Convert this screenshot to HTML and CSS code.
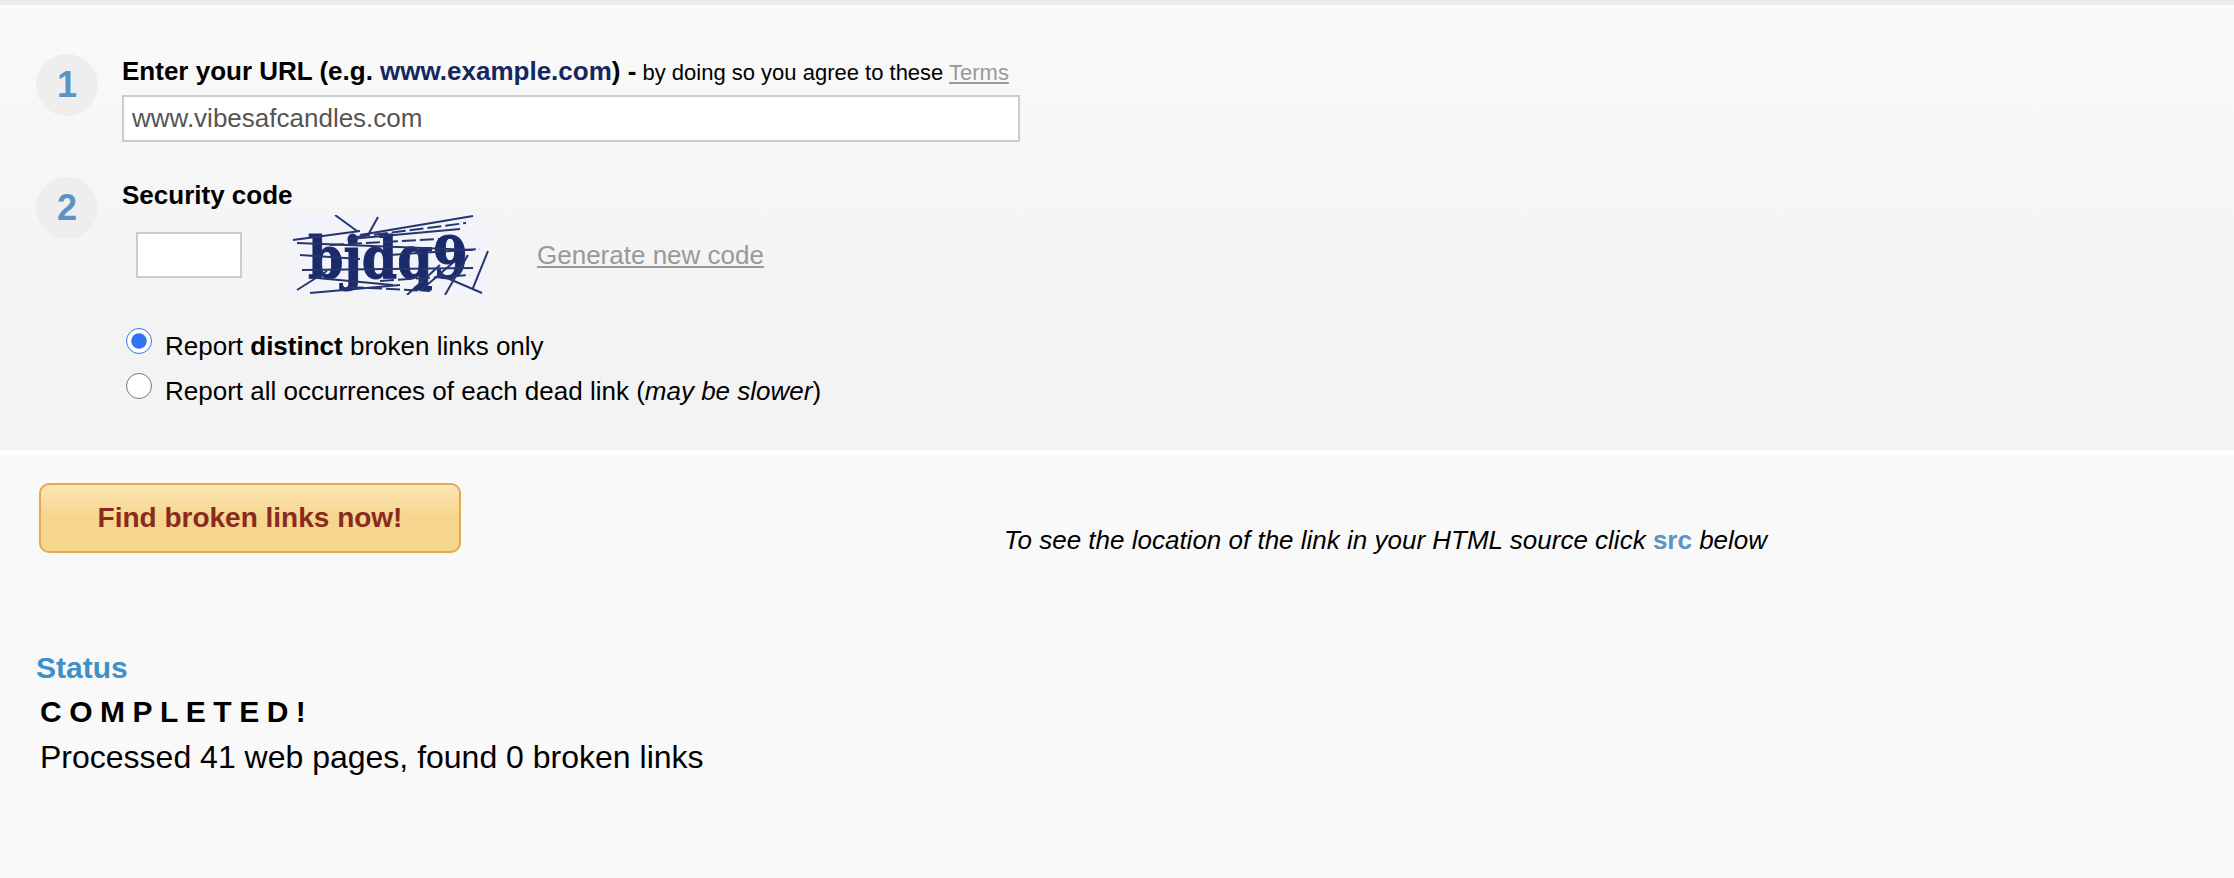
FILE: index.html
```html
<!DOCTYPE html>
<html lang="en">
<head>
  <meta charset="UTF-8" />
  <title>Broken Link Checker</title>
  <link rel="stylesheet" href="styles.css">
</head>
<body>

<form class="check-form">
  <div class="step">
    <div class="step-num">1</div>
    <div class="step-body">
      <div class="step-title">
        <b>Enter your URL (e.g. <span class="example">www.example.com</span>) -</b>
        by doing so you agree to these <a href="#" class="terms">Terms</a>
      </div>
      <input type="text" class="url-input" value="www.vibesafcandles.com" />
    </div>
  </div>

  <div class="step step-code">
    <div class="step-num">2</div>
    <div class="step-body">
      <div class="step-title"><b>Security code</b></div>
      <div class="captcha-row">
        <input type="text" class="code-input" />
        <svg class="captcha" width="200" height="80" viewBox="0 0 200 80">
          <text x="18" y="63" class="captcha-text" textLength="160" lengthAdjust="spacingAndGlyphs">bjdq9</text>
          <g class="captcha-lines">
            <path d="M45 0 L67 16 M88 2 L78 20 M183 1 L70 20 M3 25 L70 16 M7 28 L183 35 M60 24 L170 14" />
            <path d="M12 55 L183 53 M7 75 L37 56 M20 78 L110 70 M27 63 L103 70 M10 40 L70 44" />
            <path d="M198 36 L183 73 M178 40 L155 80 M150 60 L192 78 M117 80 L150 50 M130 76 L165 46" />
          </g>
          <g class="captcha-dash">
            <path d="M66 22 L176 8 M40 30 L150 24 M90 66 L180 60 M60 72 L140 76 M100 40 L190 34" />
          </g>
        </svg>
        <a href="#" class="new-code">Generate new code</a>
      </div>
      <label class="option option-first"><input type="radio" name="mode" checked /> <span>Report <b>distinct</b> broken links only</span></label>
      <label class="option"><input type="radio" name="mode" /> <span>Report all occurrences of each dead link (<i>may be slower</i>)</span></label>
    </div>
  </div>
</form>

<div class="actions">
  <button type="button" class="find-btn">Find broken links now!</button>
  <p class="hint">To see the location of the link in your HTML source click <b>src</b> below</p>
</div>

<div class="status">
  <h3>Status</h3>
  <div class="done">COMPLETED!</div>
  <div class="summary">Processed 41 web pages, found 0 broken links</div>
</div>

</body>
</html>
```

FILE: styles.css
```css
body {
  font-family: "Liberation Sans", Arial, sans-serif;
  margin: 0;
  height: 878px;
  overflow: hidden;
  background-color: #f9f9f9;
  color: #000;
  border-top: 5px solid #ebebeb;
  box-sizing: border-box;
}

.check-form {
  height: 396px;
  padding: 49px 36px 0;
  background: linear-gradient(#fafafa, #f3f3f3 70%);
  border-bottom: 5px solid #fff;
}

.step {
  display: flex;
  gap: 24px;
}
.step-code {
  margin-top: 35px;
}

.step-num {
  width: 62px;
  height: 62px;
  flex: none;
  border-radius: 50%;
  background-color: #eeeeee;
  color: #5b93c7;
  font-size: 36px;
  font-weight: bold;
  line-height: 62px;
  text-align: center;
}

.step-title {
  font-size: 22px;
  line-height: 32px;
  margin-top: 1px;
}
.step-code .step-title {
  margin-top: 2px;
}
.step-title b {
  font-size: 26px;
}
.example {
  color: #14275f;
}
.terms, .new-code {
  color: #999;
}

.url-input {
  display: block;
  width: 898px;
  height: 47px;
  margin-top: 6px;
  padding: 0 8px;
  box-sizing: border-box;
  border: 2px solid #ccc;
  background: #fff;
  color: #555;
  font-family: inherit;
  font-size: 26px;
}

.captcha-row {
  display: flex;
  align-items: center;
  margin: 2px 0 0 14px;
}
.code-input {
  width: 106px;
  height: 46px;
  box-sizing: border-box;
  border: 2px solid #ccc;
  background: #fff;
}
.captcha {
  margin-left: 48px;
  background-color: #f2f4f9;
}
.captcha-text {
  font-family: "DejaVu Serif", serif;
  font-weight: bold;
  font-size: 58px;
  fill: #1b2a6b;
  stroke: #1b2a6b;
  stroke-width: 1;
}
.captcha-lines {
  fill: none;
  stroke: #27356f;
  stroke-width: 2;
}
.captcha-dash {
  fill: none;
  stroke: #27356f;
  stroke-width: 2;
  stroke-dasharray: 14 4;
}
.new-code {
  margin-left: 47px;
  font-size: 26px;
}

.option {
  display: flex;
  align-items: center;
  gap: 13px;
  height: 45px;
  margin-left: 4px;
  font-size: 26px;
}
.option-first {
  margin-top: 29px;
}
.option input {
  width: 26px;
  height: 26px;
  margin: -11px 0 0;
  accent-color: #2f74f5;
}

.actions {
  display: flex;
  align-items: flex-start;
  padding: 28px 0 0 39px;
}
.find-btn {
  width: 422px;
  height: 70px;
  flex: none;
  border: 2px solid #e5aa4d;
  border-radius: 10px;
  background: linear-gradient(#fde6b4, #f6d58d 50%);
  color: #8a2a1e;
  font-family: inherit;
  font-size: 28px;
  font-weight: bold;
  cursor: pointer;
}
.hint {
  margin: 42px 0 0 543px;
  font-size: 26px;
  font-style: italic;
}
.hint b {
  color: #5b93c7;
  font-style: normal;
}

.status {
  margin-top: 92px;
  padding-left: 36px;
}
.status h3 {
  margin: 0;
  color: #3f8fc9;
  font-size: 30px;
  line-height: 40px;
}
.done {
  margin: 4px 0 0 4px;
  font-size: 30px;
  font-weight: bold;
  letter-spacing: 7.5px;
  line-height: 40px;
}
.summary {
  margin: 5px 0 0 4px;
  font-size: 32px;
  line-height: 40px;
}
```
